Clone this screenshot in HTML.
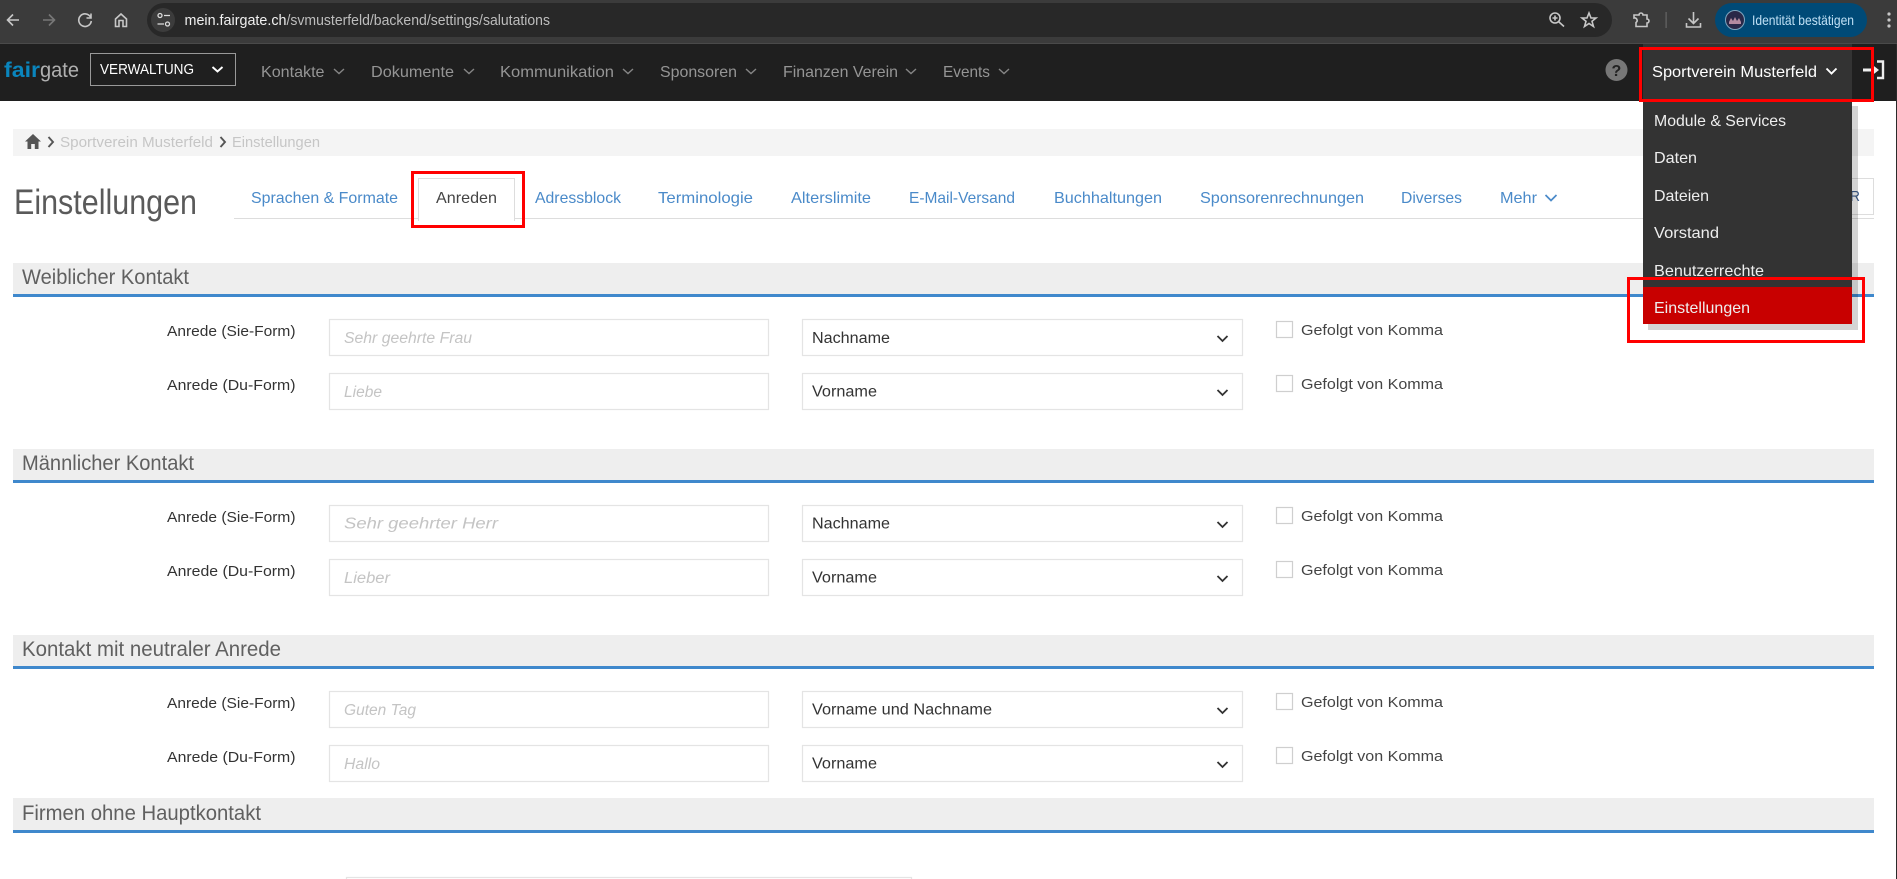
<!DOCTYPE html>
<html lang="de"><head><meta charset="utf-8"><title>Einstellungen</title>
<style>
html,body{margin:0;padding:0;background:#fff;overflow:hidden}
svg{display:block}
text{font-family:"Liberation Sans",sans-serif;white-space:pre}
.nav{font-size:16px;fill:#959595}
.tab{font-size:16px;fill:#4a8ac9}
.menu{font-size:16px;fill:#eee}
.sec{font-size:21.5px;fill:#606060}
.lbl{font-size:15px;fill:#333}
.ph{font-size:15.5px;fill:#c4c4c4;font-style:italic}
.val{font-size:15.5px;fill:#333}
.cbt{font-size:15px;fill:#444}
.box{fill:#fff;stroke:#e4e4e4;stroke-width:1.2}
.cb{fill:#fff;stroke:#cfcfcf;stroke-width:1.2}
.chev{fill:none;stroke:#333;stroke-width:1.8}
.nchev{fill:none;stroke:#858585;stroke-width:1.4}
.ic{fill:none;stroke:#c7c7c7;stroke-width:1.6}
</style></head><body>
<svg xmlns="http://www.w3.org/2000/svg" width="1897" height="879" viewBox="0 0 1897 879">
<rect width="1897" height="879" fill="#fff"/>

<!-- browser bar -->
<rect width="1897" height="44" fill="#3b3b3b"/>
<rect y="43" width="1897" height="1" fill="#4a4a4a"/>
<path class="ic" d="M19 20H8M13 14.5L7.5 20L13 25.5"/>
<path class="ic" style="stroke:#777" d="M43 20H54M49 14.5L54.500 20L49 25.500"/>
<path class="ic" d="M90.500 17A6.300 6.300 0 1 0 91.300 21M91 13.500V18H86.500"/>
<path class="ic" d="M115.500 26.500V19L121 14L126.500 19V26.500H123V20.500H119V26.500Z"/>
<rect x="147" y="3" width="1465" height="34" rx="17" fill="#282828"/>
<circle cx="163" cy="20" r="12" fill="#3c3c3c"/>
<circle cx="160" cy="15.500" r="2" fill="none" stroke="#ddd" stroke-width="1.300"/>
<path d="M164 15.500H170M157.500 24H164" stroke="#ddd" stroke-width="1.300"/>
<circle cx="167.500" cy="24" r="2" fill="none" stroke="#ddd" stroke-width="1.300"/>
<text x="184.500" y="25" font-size="14.500" fill="#f0f0f0" textLength="102" lengthAdjust="spacingAndGlyphs">mein.fairgate.ch</text>
<text x="286.500" y="25" font-size="14.500" fill="#bdbdbd" textLength="263.500" lengthAdjust="spacingAndGlyphs">/svmusterfeld/backend/settings/salutations</text>
<circle cx="1555" cy="18" r="5" class="ic"/><path class="ic" d="M1559 22L1564 26.500M1552.500 18H1557.500M1555 15.500V20.500"/>
<path class="ic" d="M1589 13L1591 18H1596L1592 21.300L1593.500 26.500L1589 23.500L1584.500 26.500L1586 21.300L1582 18H1587Z"/>
<path class="ic" d="M1634 15H1639A2 2 0 0 1 1643 15H1647V19A2 2 0 0 1 1647 23V26.500H1636V22.500A2.500 2.500 0 0 0 1634 18Z"/>
<rect x="1665.500" y="12" width="1.200" height="16" fill="#666"/>
<path class="ic" d="M1693.500 12V23M1688.500 18.500L1693.500 23.500L1698.500 18.500M1686.500 23V27H1700.500V23"/>
<rect x="1715" y="3" width="152" height="34" rx="17" fill="#004a77"/>
<circle cx="1735" cy="20" r="9.500" fill="#2a2848" stroke="#7fa6bf" stroke-width="1"/>
<path d="M1729 22l2-4 2 3 2-4 2 4 2-3 2 4v2h-12z" fill="#b48aa0"/>
<text x="1752" y="25" font-size="14" fill="#bfe0f5" textLength="102" lengthAdjust="spacingAndGlyphs">Identität bestätigen</text>
<circle cx="1889" cy="14" r="1.600" fill="#c7c7c7"/><circle cx="1889" cy="20" r="1.600" fill="#c7c7c7"/><circle cx="1889" cy="26" r="1.600" fill="#c7c7c7"/>

<!-- app nav -->
<rect y="44" width="1897" height="57" fill="#1f1f1f"/>
<text x="4" y="77" font-size="21" font-weight="700" fill="#0a85bd" textLength="36" lengthAdjust="spacingAndGlyphs">fair</text>
<text x="40" y="77" font-size="21" fill="#b0b0b0" textLength="39" lengthAdjust="spacingAndGlyphs">gate</text>
<rect x="90.500" y="53.500" width="145" height="32" fill="none" stroke="#999" stroke-width="1"/>
<text x="100" y="74" font-size="15" fill="#fff" textLength="94" lengthAdjust="spacingAndGlyphs">VERWALTUNG</text>
<path d="M212.500 67L217.500 71.500L222.500 67" fill="none" stroke="#fff" stroke-width="1.900"/>

<text class="nav" x="261" y="77" textLength="63.500" lengthAdjust="spacingAndGlyphs">Kontakte</text><path class="nchev" d="M334 69L339 73.500L344 69"/>
<text class="nav" x="371" y="77" textLength="83" lengthAdjust="spacingAndGlyphs">Dokumente</text><path class="nchev" d="M464 69L469 73.500L474 69"/>
<text class="nav" x="500" y="77" textLength="114" lengthAdjust="spacingAndGlyphs">Kommunikation</text><path class="nchev" d="M623 69L628 73.500L633 69"/>
<text class="nav" x="660" y="77" textLength="77" lengthAdjust="spacingAndGlyphs">Sponsoren</text><path class="nchev" d="M746 69L751 73.500L756 69"/>
<text class="nav" x="783" y="77" textLength="115" lengthAdjust="spacingAndGlyphs">Finanzen Verein</text><path class="nchev" d="M906 69L911 73.500L916 69"/>
<text class="nav" x="943" y="77" textLength="47" lengthAdjust="spacingAndGlyphs">Events</text><path class="nchev" d="M999 69L1004 73.500L1009 69"/>

<circle cx="1616.500" cy="70" r="11" fill="#777"/>
<text x="1611.500" y="76" font-size="16" font-weight="700" fill="#222">?</text>
<rect x="1643" y="44" width="209" height="57" fill="#333"/>
<text x="1652" y="77" font-size="16" fill="#fff" textLength="165" lengthAdjust="spacingAndGlyphs">Sportverein Musterfeld</text>
<path d="M1826.500 68.500L1831.500 73.500L1836.500 68.500" fill="none" stroke="#fff" stroke-width="1.900"/>
<path d="M1863 70H1872" stroke="#eee" stroke-width="3"/>
<path d="M1872 64.500L1879 70L1872 75.500Z" fill="#eee"/>
<path d="M1877 61.500H1883V78H1877" fill="none" stroke="#eee" stroke-width="2.400"/>

<!-- breadcrumb -->
<rect x="13" y="129" width="1861" height="27" fill="#f4f4f4"/>
<path d="M33 134L41 141.500H38.500V149H34.800V144H31.200V149H27.500V141.500H25Z" fill="#555"/>
<path d="M48.500 137L53 142L48.500 147" fill="none" stroke="#555" stroke-width="1.900"/>
<text x="60" y="147" font-size="15" fill="#c6c6c6" textLength="153" lengthAdjust="spacingAndGlyphs">Sportverein Musterfeld</text>
<path d="M220.500 137L225 142L220.500 147" fill="none" stroke="#555" stroke-width="1.900"/>
<text x="232" y="147" font-size="15" fill="#c6c6c6" textLength="88" lengthAdjust="spacingAndGlyphs">Einstellungen</text>

<!-- title + tabs -->
<text x="14" y="214" font-size="35" fill="#5a5a5a" textLength="183" lengthAdjust="spacingAndGlyphs">Einstellungen</text>
<rect x="234" y="218" width="1640" height="1" fill="#ddd"/>
<rect x="418.500" y="178.500" width="96" height="42" fill="#fff" stroke="#ddd" stroke-width="1"/>
<rect x="419" y="217" width="95" height="5" fill="#fff"/>
<path d="M418.500 178.500V221M514.500 178.500V221" stroke="#ddd" stroke-width="1"/>
<text class="tab" x="251" y="203" textLength="147" lengthAdjust="spacingAndGlyphs">Sprachen &amp; Formate</text>
<text class="tab" style="fill:#444" x="436" y="203" textLength="61" lengthAdjust="spacingAndGlyphs">Anreden</text>
<text class="tab" x="535" y="203" textLength="86" lengthAdjust="spacingAndGlyphs">Adressblock</text>
<text class="tab" x="658" y="203" textLength="95" lengthAdjust="spacingAndGlyphs">Terminologie</text>
<text class="tab" x="791" y="203" textLength="80" lengthAdjust="spacingAndGlyphs">Alterslimite</text>
<text class="tab" x="909" y="203" textLength="106" lengthAdjust="spacingAndGlyphs">E-Mail-Versand</text>
<text class="tab" x="1054" y="203" textLength="108" lengthAdjust="spacingAndGlyphs">Buchhaltungen</text>
<text class="tab" x="1200" y="203" textLength="164" lengthAdjust="spacingAndGlyphs">Sponsorenrechnungen</text>
<text class="tab" x="1401" y="203" textLength="61" lengthAdjust="spacingAndGlyphs">Diverses</text>
<text class="tab" x="1500" y="203" textLength="37" lengthAdjust="spacingAndGlyphs">Mehr</text>
<path d="M1545.500 195L1551 200.500L1556.500 195" fill="none" stroke="#4a8ac9" stroke-width="1.700"/>
<rect x="1800.500" y="178.500" width="73" height="36" fill="#fff" stroke="#ddd" stroke-width="1"/>
<text x="1850" y="201" font-size="15" fill="#3f5f8f" textLength="10" lengthAdjust="spacingAndGlyphs">R</text>

<!-- section 1 -->
<rect x="13" y="263" width="1861" height="31" fill="#eee"/><rect x="13" y="294" width="1861" height="3" fill="#3f88cc"/>
<text class="sec" x="22" y="284" textLength="167" lengthAdjust="spacingAndGlyphs">Weiblicher Kontakt</text>

<text class="lbl" x="167" y="336" textLength="128.500" lengthAdjust="spacingAndGlyphs">Anrede (Sie-Form)</text>
<rect class="box" x="329.500" y="319.500" width="439" height="36"/>
<text class="ph" x="344" y="343" textLength="128" lengthAdjust="spacingAndGlyphs">Sehr geehrte Frau</text>
<rect class="box" x="802.500" y="319.500" width="440" height="36"/>
<text class="val" x="812" y="343" textLength="78" lengthAdjust="spacingAndGlyphs">Nachname</text>
<path class="chev" d="M1217.500 336L1222.500 341L1227.500 336"/>
<rect class="cb" x="1276.500" y="321.500" width="16" height="16"/>
<text class="cbt" x="1301" y="335" textLength="142" lengthAdjust="spacingAndGlyphs">Gefolgt von Komma</text>

<text class="lbl" x="167" y="390" textLength="128.500" lengthAdjust="spacingAndGlyphs">Anrede (Du-Form)</text>
<rect class="box" x="329.500" y="373.500" width="439" height="36"/>
<text class="ph" x="344" y="397" textLength="38" lengthAdjust="spacingAndGlyphs">Liebe</text>
<rect class="box" x="802.500" y="373.500" width="440" height="36"/>
<text class="val" x="812" y="396.500" textLength="65" lengthAdjust="spacingAndGlyphs">Vorname</text>
<path class="chev" d="M1217.500 390L1222.500 395L1227.500 390"/>
<rect class="cb" x="1276.500" y="375.500" width="16" height="16"/>
<text class="cbt" x="1301" y="389" textLength="142" lengthAdjust="spacingAndGlyphs">Gefolgt von Komma</text>

<!-- section 2 -->
<rect x="13" y="449" width="1861" height="31" fill="#eee"/><rect x="13" y="480" width="1861" height="3" fill="#3f88cc"/>
<text class="sec" x="22" y="470" textLength="172" lengthAdjust="spacingAndGlyphs">Männlicher Kontakt</text>

<text class="lbl" x="167" y="522" textLength="128.500" lengthAdjust="spacingAndGlyphs">Anrede (Sie-Form)</text>
<rect class="box" x="329.500" y="505.500" width="439" height="36"/>
<text class="ph" x="344" y="528.500" textLength="154" lengthAdjust="spacingAndGlyphs">Sehr geehrter Herr</text>
<rect class="box" x="802.500" y="505.500" width="440" height="36"/>
<text class="val" x="812" y="528.500" textLength="78" lengthAdjust="spacingAndGlyphs">Nachname</text>
<path class="chev" d="M1217.500 522L1222.500 527L1227.500 522"/>
<rect class="cb" x="1276.500" y="507.500" width="16" height="16"/>
<text class="cbt" x="1301" y="521" textLength="142" lengthAdjust="spacingAndGlyphs">Gefolgt von Komma</text>

<text class="lbl" x="167" y="576" textLength="128.500" lengthAdjust="spacingAndGlyphs">Anrede (Du-Form)</text>
<rect class="box" x="329.500" y="559.500" width="439" height="36"/>
<text class="ph" x="344" y="583" textLength="46" lengthAdjust="spacingAndGlyphs">Lieber</text>
<rect class="box" x="802.500" y="559.500" width="440" height="36"/>
<text class="val" x="812" y="582.500" textLength="65" lengthAdjust="spacingAndGlyphs">Vorname</text>
<path class="chev" d="M1217.500 576L1222.500 581L1227.500 576"/>
<rect class="cb" x="1276.500" y="561.500" width="16" height="16"/>
<text class="cbt" x="1301" y="575" textLength="142" lengthAdjust="spacingAndGlyphs">Gefolgt von Komma</text>

<!-- section 3 -->
<rect x="13" y="635" width="1861" height="31" fill="#eee"/><rect x="13" y="666" width="1861" height="3" fill="#3f88cc"/>
<text class="sec" x="22" y="656" textLength="259" lengthAdjust="spacingAndGlyphs">Kontakt mit neutraler Anrede</text>

<text class="lbl" x="167" y="708" textLength="128.500" lengthAdjust="spacingAndGlyphs">Anrede (Sie-Form)</text>
<rect class="box" x="329.500" y="691.500" width="439" height="36"/>
<text class="ph" x="344" y="715" textLength="72" lengthAdjust="spacingAndGlyphs">Guten Tag</text>
<rect class="box" x="802.500" y="691.500" width="440" height="36"/>
<text class="val" x="812" y="714.500" textLength="180" lengthAdjust="spacingAndGlyphs">Vorname und Nachname</text>
<path class="chev" d="M1217.500 708L1222.500 713L1227.500 708"/>
<rect class="cb" x="1276.500" y="693.500" width="16" height="16"/>
<text class="cbt" x="1301" y="707" textLength="142" lengthAdjust="spacingAndGlyphs">Gefolgt von Komma</text>

<text class="lbl" x="167" y="762" textLength="128.500" lengthAdjust="spacingAndGlyphs">Anrede (Du-Form)</text>
<rect class="box" x="329.500" y="745.500" width="439" height="36"/>
<text class="ph" x="344" y="769" textLength="36" lengthAdjust="spacingAndGlyphs">Hallo</text>
<rect class="box" x="802.500" y="745.500" width="440" height="36"/>
<text class="val" x="812" y="768.500" textLength="65" lengthAdjust="spacingAndGlyphs">Vorname</text>
<path class="chev" d="M1217.500 762L1222.500 767L1227.500 762"/>
<rect class="cb" x="1276.500" y="747.500" width="16" height="16"/>
<text class="cbt" x="1301" y="761" textLength="142" lengthAdjust="spacingAndGlyphs">Gefolgt von Komma</text>

<!-- section 4 -->
<rect x="13" y="798" width="1861" height="32" fill="#eee"/><rect x="13" y="830" width="1861" height="3" fill="#3f88cc"/>
<text class="sec" x="22" y="820" textLength="239" lengthAdjust="spacingAndGlyphs">Firmen ohne Hauptkontakt</text>
<rect class="box" x="346.500" y="877.500" width="565" height="20"/>

<!-- dropdown menu -->
<rect x="1648" y="106" width="210" height="224" fill="#000" fill-opacity=".17"/>
<rect x="1643" y="101" width="209" height="186" fill="#333"/>
<rect x="1643" y="287" width="209" height="37" fill="#c80000"/>
<text class="menu" x="1654" y="126" textLength="132" lengthAdjust="spacingAndGlyphs">Module &amp; Services</text>
<text class="menu" x="1654" y="163" textLength="43" lengthAdjust="spacingAndGlyphs">Daten</text>
<text class="menu" x="1654" y="201" textLength="55" lengthAdjust="spacingAndGlyphs">Dateien</text>
<text class="menu" x="1654" y="238" textLength="65" lengthAdjust="spacingAndGlyphs">Vorstand</text>
<text class="menu" x="1654" y="276" textLength="110" lengthAdjust="spacingAndGlyphs">Benutzerrechte</text>
<text class="menu" x="1654" y="313" textLength="96" lengthAdjust="spacingAndGlyphs">Einstellungen</text>

<!-- annotation rectangles -->
<g fill="none" stroke="#f00" stroke-width="3">
<rect x="412.500" y="172.500" width="111" height="54"/>
<rect x="1640.500" y="48.500" width="232" height="52"/>
<rect x="1628.500" y="278.500" width="235" height="63"/>
</g>
<rect x="1896" y="44" width="1" height="835" fill="#2a2a2a"/>
</svg>
</body></html>
